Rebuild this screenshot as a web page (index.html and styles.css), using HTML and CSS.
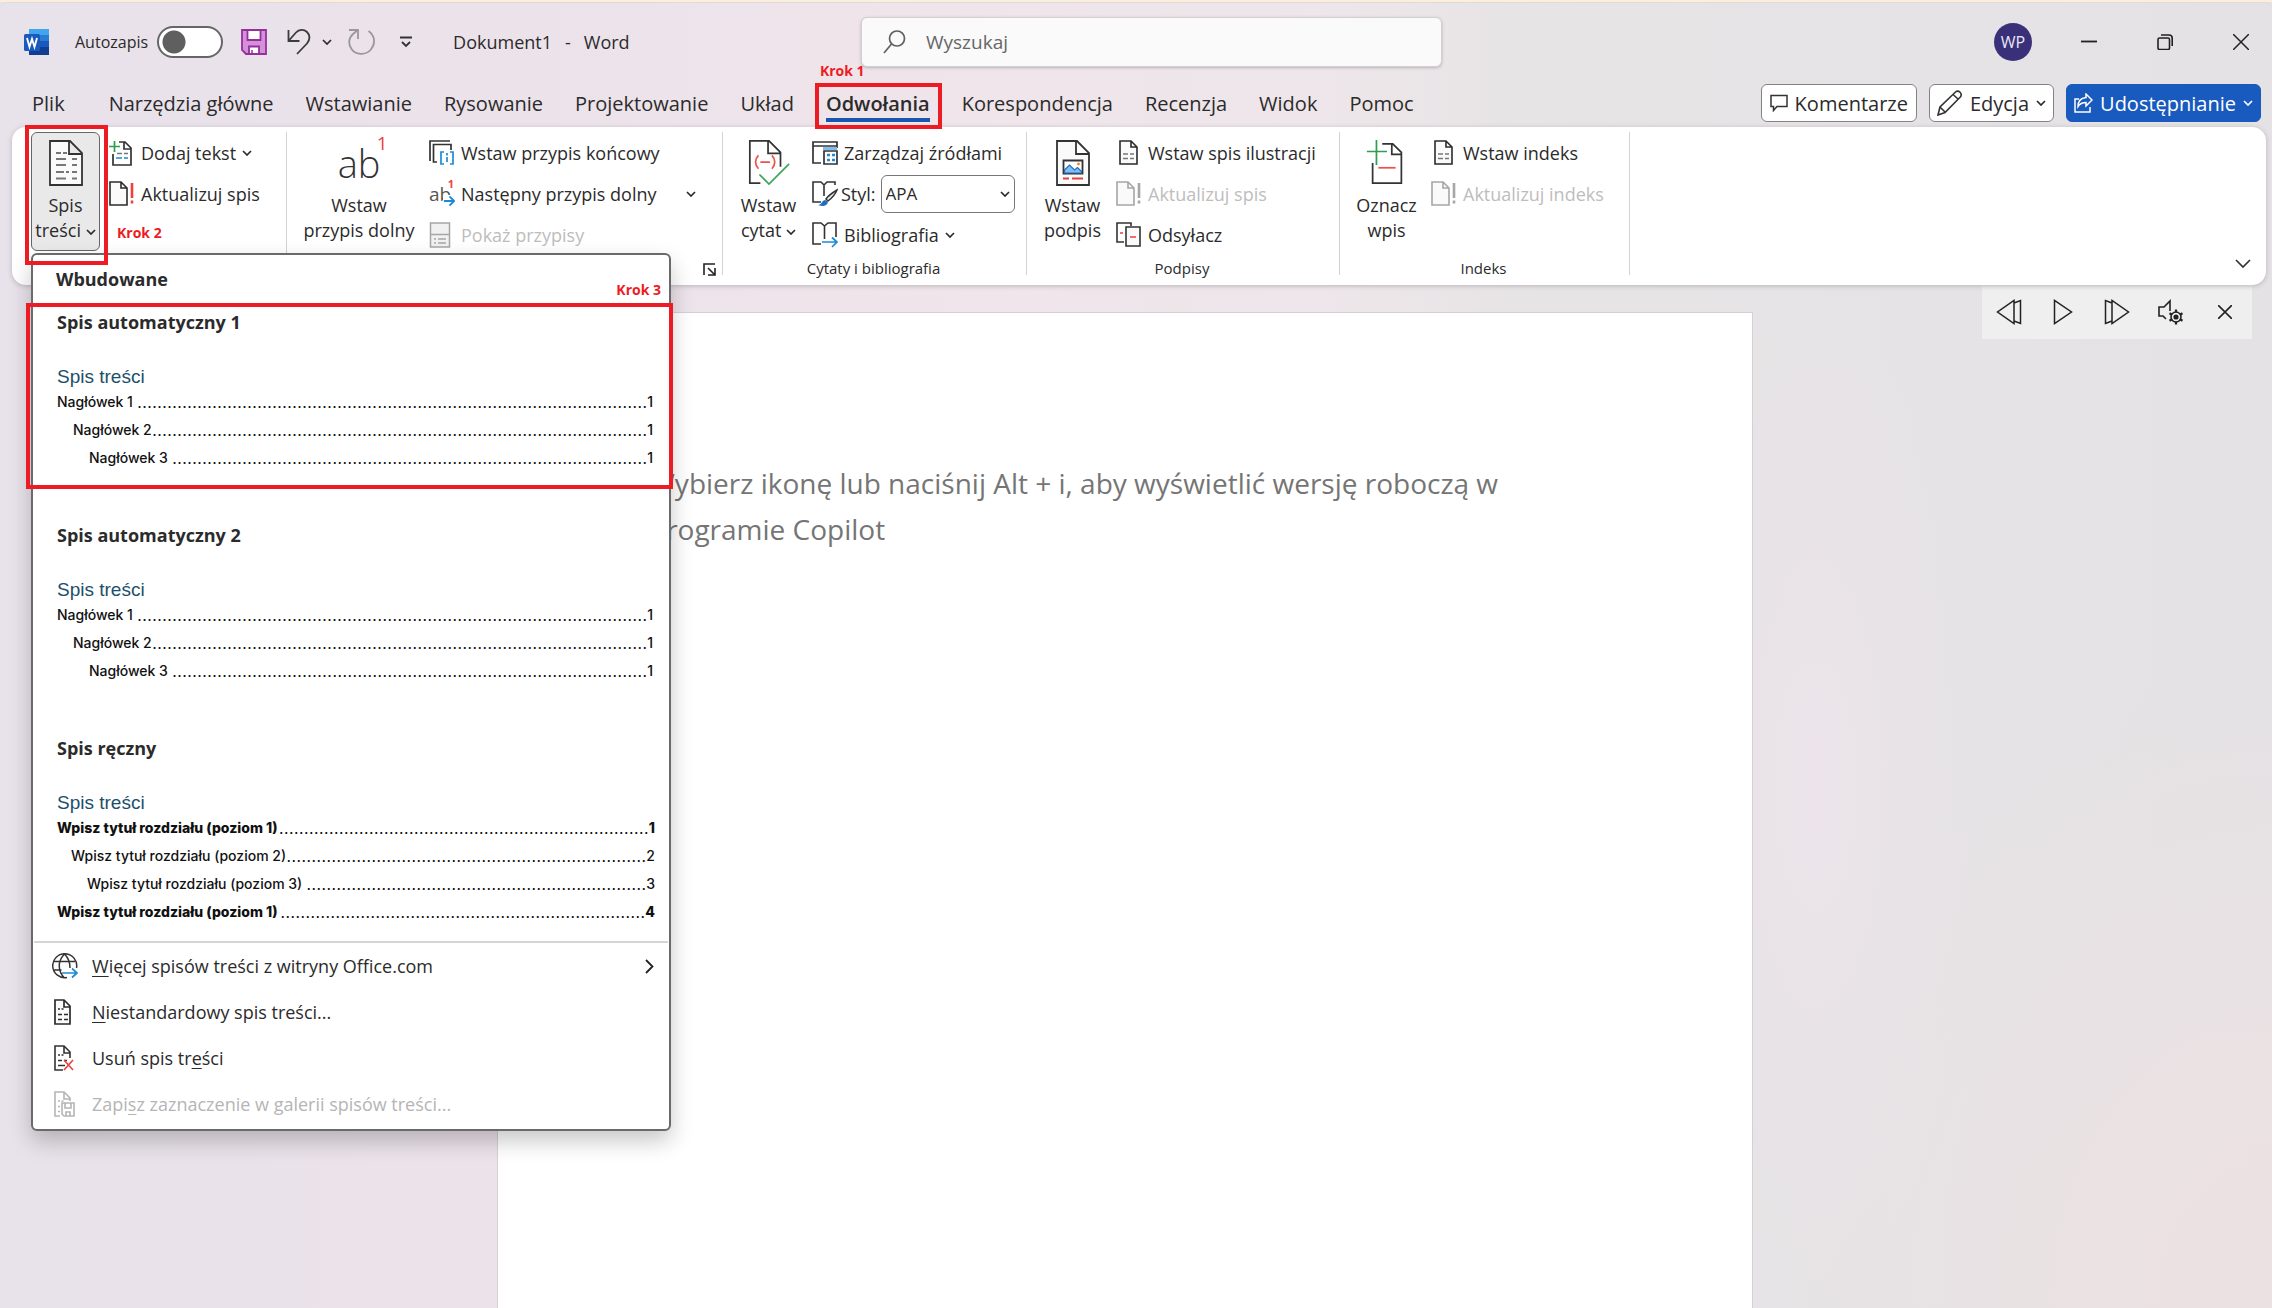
FILE: index.html
```html
<!DOCTYPE html>
<html lang="pl">
<head>
<meta charset="utf-8">
<meta name="viewport" content="width=device-width, initial-scale=1">
<title>Dokument1 - Word</title>
<link rel="stylesheet" href="styles.css">
</head>
<body>
<svg class="sprite" aria-hidden="true">
  <symbol id="chev" viewBox="0 0 10 6"><path d="M1 1l4 4 4-4" fill="none" stroke="currentColor" stroke-width="1.7"/></symbol>
  <symbol id="doc-alert" viewBox="0 0 26 26"><path d="M1 1h11l6 6v17H1z M12 1v6h6" fill="#fafafa" stroke="currentColor" stroke-width="1.6"/><path d="M23 2v15M23 19.500v3" stroke="var(--accent, currentColor)" stroke-width="2.600"/></symbol>
  <symbol id="doc-lines" viewBox="0 0 26 26"><path d="M4 1h11l6 6v17H4z M15 1v6h6" fill="#fafafa" stroke="currentColor" stroke-width="1.6"/><path d="M7 14h5M14 14h4M7 18.500h5M14 18.500h4" stroke="#777" stroke-width="1.500"/></symbol>
  <symbol id="doc-toc" viewBox="0 0 26 26"><path d="M3 1h9l6 6v18H3z M12 1v7h6" fill="#fafafa" stroke="currentColor" stroke-width="1.700"/><path d="M6 10h2M9.500 10h2M6 15.500h4M12 15.500h4M6 20.500h4M12 20.500h4" stroke="currentColor" stroke-width="1.300"/></symbol>
</svg>

<div class="app">
  <header class="titlebar">
    <div class="titlebar-left">
      <svg class="word-logo" viewBox="0 0 28 28" aria-hidden="true">
        <path d="M6 1h20v7H6z" fill="#41a5ee"/><path d="M6 7h20v7H6z" fill="#2b7cd3"/><path d="M6 13h20v7H6z" fill="#185abd"/><path d="M6 19h20v8H6z" fill="#103f91"/>
        <rect x="1" y="6" width="16" height="17" rx="1.500" fill="#185abd"/>
        <path d="M4 10l2.500 9L9 11l2.500 8L14 10" fill="none" stroke="#fff" stroke-width="1.900"/>
      </svg>
      <label class="autosave">Autozapis <input type="checkbox" role="switch" class="toggle"></label>
      <button class="icon-btn save" aria-label="Zapisz"><svg width="26" height="26" viewBox="0 0 26 26"><path d="M1 1h24v24H5l-4-4z" fill="#d68fdb" stroke="#93309c" stroke-width="1.800"/><path d="M6.500 1h13v10h-13z M8 25v-7.500h10V25z" fill="#fff" stroke="#93309c" stroke-width="1.800"/><path d="M11 21v4" stroke="#93309c" stroke-width="1.500"/></svg></button>
      <button class="icon-btn undo" aria-label="Cofnij"><svg width="24" height="27" viewBox="0 0 24 27" fill="none" stroke="#3b3b3b" stroke-width="1.800"><path d="M1.500 2v11h11M1.500 13L9 4.500C12 1 17 1 20 4c3.500 3.500 3 7.500 0 11.500L10 26"/></svg></button>
      <button class="icon-btn undo-more" aria-label="Historia"><svg width="10" height="6"><use href="#chev"/></svg></button>
      <button class="icon-btn redo" aria-label="Powtórz"><svg width="27" height="27" viewBox="0 0 27 27" fill="none" stroke="#9b989c" stroke-width="1.800"><path d="M1 2h9v9M10 2L5 6c-4.500 4-5 10-1.500 15 4 6 14 6.500 19 1 5.500-6 4.500-14.500-2-19"/></svg></button>
      <button class="icon-btn qat" aria-label="Dostosuj"><svg width="12" height="12" viewBox="0 0 12 12" fill="none" stroke="#333" stroke-width="1.800"><path d="M0 1.500h12M2 6l4 4 4-4"/></svg></button>
      <span class="doc-name"><span>Dokument1</span><span>-</span><span>Word</span></span>
    </div>
    <label class="search">
      <svg width="23" height="24" viewBox="0 0 23 24" fill="none" stroke="#5f5f5f" stroke-width="1.700" aria-hidden="true"><circle cx="14" cy="8.500" r="7.500"/><path d="M8.500 14L1 23"/></svg>
      <input type="search" placeholder="Wyszukaj" aria-label="Wyszukaj">
    </label>
    <div class="window-controls">
      <button class="avatar" aria-label="Konto WP">WP</button>
      <button class="win-btn" aria-label="Minimalizuj"><svg width="16" height="16"><path d="M0 7.500h16" stroke="#222" stroke-width="1.800"/></svg></button>
      <button class="win-btn" aria-label="Przywróć"><svg width="16" height="16" viewBox="0 0 16 16" fill="none" stroke="#222" stroke-width="1.600"><rect x="1" y="4" width="11.500" height="11.500" rx="1.500"/><path d="M4 1h8c2 0 3.200 1.200 3.200 3.200V12"/></svg></button>
      <button class="win-btn" aria-label="Zamknij"><svg width="16" height="16"><path d="M0 0l16 16M16 0L0 16" stroke="#222" stroke-width="1.500"/></svg></button>
    </div>
  </header>

  <div class="tabs-row">
    <nav class="tabs">
      <button class="tab tab-file">Plik</button>
      <button class="tab">Narzędzia główne</button>
      <button class="tab">Wstawianie</button>
      <button class="tab">Rysowanie</button>
      <button class="tab">Projektowanie</button>
      <button class="tab">Układ</button>
      <div class="marked">
        <button class="tab active">Odwołania</button>
        <span class="mark mark-tab"></span>
        <span class="step step-tab">Krok 1</span>
      </div>
      <button class="tab">Korespondencja</button>
      <button class="tab">Recenzja</button>
      <button class="tab">Widok</button>
      <button class="tab">Pomoc</button>
    </nav>
    <div class="actions">
      <button class="action"><svg width="18" height="18" viewBox="0 0 18 18" fill="none" stroke="#333" stroke-width="1.500"><path d="M1 1.500h16v11H7L3.500 16.500v-4H1z"/></svg>Komentarze</button>
      <button class="action action-edit"><svg width="26" height="26" viewBox="0 0 26 26" fill="none" stroke="#333" stroke-width="1.600"><path d="M1 25l2-8L18.500 2c3-2.500 7.500 1.500 4.800 5L8 22.500z M16 4.500l5.500 5M3 17l5.500 5.500"/></svg>Edycja<svg width="10" height="6"><use href="#chev"/></svg></button>
      <button class="action action-share"><svg width="19" height="20" viewBox="0 0 19 20" fill="none" stroke="currentColor" stroke-width="1.500"><path d="M5 6H1v13h15v-5M12 1l6 6-6 6V9.500c-4 0-6 1-8 4 0-5 3-8.500 8-9z"/></svg>Udostępnianie<svg width="10" height="6"><use href="#chev"/></svg></button>
    </div>
  </div>

  <section class="ribbon" aria-label="Odwołania">
    <div class="group group-toc">
      <div class="group-body">
        <div class="marked toc-anchor">
          <button class="big pressed">
            <svg width="34" height="46" viewBox="0 0 34 46" fill="none"><path d="M1 1h20l12 12v32H1z M20 1v13h13" fill="#fafafa" stroke="#333" stroke-width="1.800"/><path d="M7 13h5M14 13h4M7 19h10M23 19h5M7 25h10M23 25h5M7 32h8M17 32h3M23 32h5M7 38.500h10M23 38.500h5" stroke="#777" stroke-width="1.800"/></svg>
            <span>Spis</span><span>treści <svg width="10" height="6"><use href="#chev"/></svg></span>
          </button>
          <span class="mark mark-toc"></span>

          <div class="menu">
            <h2 class="menu-head">Wbudowane</h2>
            <span class="step step-menu">Krok 3</span>
            <button class="entry">
              <span class="entry-title">Spis automatyczny 1</span>
              <span class="toc-title">Spis treści</span>
              <span class="toc-row"><span>Nagłówek 1</span><span class="dots"></span><span>1</span></span>
              <span class="toc-row lvl2"><span>Nagłówek 2</span><span class="dots"></span><span>1</span></span>
              <span class="toc-row lvl3"><span>Nagłówek 3</span><span class="dots"></span><span>1</span></span>
              <span class="mark mark-entry"></span>
            </button>
            <button class="entry">
              <span class="entry-title">Spis automatyczny 2</span>
              <span class="toc-title">Spis treści</span>
              <span class="toc-row"><span>Nagłówek 1</span><span class="dots"></span><span>1</span></span>
              <span class="toc-row lvl2"><span>Nagłówek 2</span><span class="dots"></span><span>1</span></span>
              <span class="toc-row lvl3"><span>Nagłówek 3</span><span class="dots"></span><span>1</span></span>
            </button>
            <button class="entry entry-manual">
              <span class="entry-title">Spis ręczny</span>
              <span class="toc-title">Spis treści</span>
              <span class="toc-row strong"><span>Wpisz tytuł rozdziału (poziom 1)</span><span class="dots"></span><span>1</span></span>
              <span class="toc-row lvl2"><span>Wpisz tytuł rozdziału (poziom 2)</span><span class="dots"></span><span>2</span></span>
              <span class="toc-row lvl3"><span>Wpisz tytuł rozdziału (poziom 3)</span><span class="dots"></span><span>3</span></span>
              <span class="toc-row strong"><span>Wpisz tytuł rozdziału (poziom 1)</span><span class="dots"></span><span>4</span></span>
            </button>
            <div class="menu-items">
              <button class="item"><svg width="26" height="26" viewBox="0 0 26 26" fill="none" stroke="#333" stroke-width="1.500"><path d="M24.500 15A12 12 0 1 0 15 24.500M12.500 1c-7 7-7 17 0 24M12.500 1c4 4 5.500 8 5.500 14M2 8.500h21M1.500 17h8"/><path d="M10 20h15M20 15.500l5 4.500-5 4.500" stroke="#1e8ad6" stroke-width="1.700"/></svg><span><u>W</u>ięcej spisów treści z witryny Office.com</span><svg class="more" width="9" height="15" viewBox="0 0 9 15"><path d="M1 1l6.500 6.500L1 14" fill="none" stroke="#222" stroke-width="1.800"/></svg></button>
              <button class="item"><svg width="26" height="26"><use href="#doc-toc"/></svg><span><u>N</u>iestandardowy spis treści...</span></button>
              <button class="item"><svg width="26" height="26" viewBox="0 0 26 26" fill="none" stroke="#333" stroke-width="1.600"><path d="M11 25H3V1h9l6 6v6M12 1v7h6M6 10h2M9.500 10h2M6 15.500h4M12 15.500h3M6 20.500h7"/><path d="M12 15l9 10M21 15l-9 10" stroke="#e8413c"/></svg><span>Usuń spis tr<u>e</u>ści</span></button>
              <button class="item" disabled><svg width="26" height="26" viewBox="0 0 26 26" fill="none" stroke="currentColor" stroke-width="1.600"><path d="M8 25H3V1h9l6 6v3M12 1v7h6M6 10h2M9.500 10h2M6 15.500h2M6 20.500h2"/><path d="M10 12h12v13H12l-2-2z M13 12v5h6v-5M14 25v-4h4v4"/></svg><span>Zapi<u>s</u>z zaznaczenie w galerii spisów treści...</span></button>
            </div>
          </div>
        </div>
        <div class="stack">
          <button class="small"><svg width="26" height="26" viewBox="0 0 26 26" fill="none"><path d="M10 2h6l6 6v17H4V14M15 2v7h7" stroke="#333" stroke-width="1.700"/><path d="M0 6.500h11M5.500 1v11" stroke="#2f9e4d" stroke-width="1.700"/><path d="M8 13.500h5M15 13.500h4" stroke="#777" stroke-width="1.500"/><path d="M7 18h6M15 18h4" stroke="#1e8ad6" stroke-width="1.700"/></svg><span>Dodaj tekst</span><svg width="10" height="6"><use href="#chev"/></svg></button>
          <button class="small alert"><svg width="26" height="26"><use href="#doc-alert"/></svg><span>Aktualizuj spis</span></button>
          <span class="step step-toc">Krok 2</span>
        </div>
      </div>
    </div>

    <div class="group group-notes">
      <div class="group-body">
        <button class="big">
          <span class="ab">ab<sup>1</sup></span>
          <span>Wstaw</span><span>przypis dolny</span>
        </button>
        <div class="stack">
          <button class="small"><svg width="26" height="26" viewBox="0 0 26 26" fill="none"><path d="M1 21V1h20M8 22H4.500V4.500H22V10" stroke="#333" stroke-width="1.700"/><path d="M15 12h-3v12h3M21 12h3v12h-3M18 13v2.500M18 17v5" stroke="#1e8ad6" stroke-width="1.700"/></svg><span>Wstaw przypis końcowy</span></button>
          <div class="split">
            <button class="small"><span class="ab-small">ab<sup>1</sup><svg width="12" height="12" viewBox="0 0 13 13" fill="none" stroke="#1e8ad6" stroke-width="2"><path d="M1 6.500h11M7 1.500l5 5-5 5"/></svg></span><span>Następny przypis dolny</span></button>
            <button class="small" aria-label="Więcej"><svg width="10" height="6"><use href="#chev"/></svg></button>
          </div>
          <button class="small" disabled><svg width="26" height="26" viewBox="0 0 26 26" fill="none" stroke="#a6a6a6" stroke-width="1.500"><path d="M1.500 1h19v24h-19z" fill="#f1f1f1"/><path d="M1.500 12.500h19M5 17h2M9 17h8M5 21h2M9 21h8"/></svg><span>Pokaż przypisy</span></button>
        </div>
      </div>
      <div class="group-label"><button class="launcher" aria-label="Opcje przypisów"><svg width="13" height="13" viewBox="0 0 13 13" fill="none" stroke="#222" stroke-width="1.600"><path d="M1 12V1h11M5 5l6 6M12 5v7H5"/></svg></button></div>
    </div>

    <div class="group group-cite">
      <div class="group-body">
        <button class="big">
          <svg class="wide" width="44" height="48" viewBox="0 0 44 48" fill="none"><path d="M13 45H2V1h20l12 12v15M21 1v13h13" stroke="#333" stroke-width="1.800"/><path d="M11 16c-4 4-4 10 0 14M25 16c4 4 4 10 0 14M13 23h10" stroke="#f0504a" stroke-width="1.800"/><path d="M12 36l10 10 21-21" stroke="#3aa757" stroke-width="1.800"/></svg>
          <span>Wstaw</span><span>cytat <svg width="10" height="6"><use href="#chev"/></svg></span>
        </button>
        <div class="stack">
          <button class="small"><svg width="26" height="26" viewBox="0 0 26 26" fill="none"><path d="M9 23H1V2h24v6M1 6h24" stroke="#333" stroke-width="1.700"/><path d="M11 7h14v3H11z" fill="#83bdf0"/><path d="M12 11h13v13H12z" stroke="#333" stroke-width="1.700"/><path d="M15 15h3M20 15h3M15 20h3M20 20h3" stroke="#1e8ad6" stroke-width="2.600"/></svg><span>Zarządzaj źródłami</span></button>
          <div class="small style-row">
            <svg width="26" height="26" viewBox="0 0 26 26" fill="none"><path d="M9 21H1V1h8l3 3v11M12 4l3-3h8v3" stroke="#333" stroke-width="1.600"/><path d="M25 9c-5 3-9 6-11 9l2 2c4-3 7-6 9-11z" stroke="#333" stroke-width="1.500" fill="#eee"/><path d="M6 24c4 0 3-4 7-5 3 1 4 3 1 5-2 1.500-5 1-8 0z" fill="#1e6fc0"/></svg>
            <label for="style">Styl:</label>
            <span class="combo"><select id="style"><option>APA</option><option>MLA</option></select><svg width="10" height="6"><use href="#chev"/></svg></span>
          </div>
          <button class="small"><svg width="26" height="26" viewBox="0 0 26 26" fill="none"><path d="M9 22H1V1h8l3.500 3v13M12.500 4L16 1h8v14" stroke="#333" stroke-width="1.600"/><path d="M10 20h15M20 15.500l5 4.500-5 5" stroke="#1e8ad6" stroke-width="1.700"/></svg><span>Bibliografia</span><svg width="10" height="6"><use href="#chev"/></svg></button>
        </div>
      </div>
      <div class="group-label">Cytaty i bibliografia</div>
    </div>

    <div class="group group-caption">
      <div class="group-body">
        <button class="big">
          <svg width="34" height="46" viewBox="0 0 34 46" fill="none"><path d="M1 1h20l12 12v32H1z M20 1v13h13" fill="#fafafa" stroke="#333" stroke-width="1.800"/><path d="M7.500 20.500h19v13h-19z" stroke="#333" stroke-width="1.800" fill="#fff"/><path d="M8.500 30l5-5 5 5 3-2.500 4 4v1.500h-17z" fill="#83bdf0" stroke="#1e6fc0" stroke-width="1.200"/><circle cx="22.500" cy="24" r="1.400" fill="#f08030"/><path d="M7 38.500h6M16 38.500h11" stroke="#e8413c" stroke-width="1.800"/></svg>
          <span>Wstaw</span><span>podpis</span>
        </button>
        <div class="stack">
          <button class="small"><svg width="26" height="26"><use href="#doc-lines"/></svg><span>Wstaw spis ilustracji</span></button>
          <button class="small" disabled><svg width="26" height="26"><use href="#doc-alert"/></svg><span>Aktualizuj spis</span></button>
          <button class="small"><svg width="26" height="26" viewBox="0 0 26 26" fill="none"><path d="M8 20H1V1h14v3" stroke="#333" stroke-width="1.600"/><path d="M10 5h14v19H10z" fill="#fafafa" stroke="#333" stroke-width="1.600"/><path d="M4 11h3M14 15h6" stroke="#e8413c" stroke-width="1.700"/></svg><span>Odsyłacz</span></button>
        </div>
      </div>
      <div class="group-label">Podpisy</div>
    </div>

    <div class="group group-index">
      <div class="group-body">
        <button class="big">
          <svg class="wide" width="44" height="48" viewBox="0 0 44 48" fill="none"><path d="M17 4h11l9 9v32H7V24M27 4v11h10" stroke="#333" stroke-width="1.800"/><path d="M1 12h21M11 0v26" stroke="#2f9e4d" stroke-width="1.800"/><path d="M13 29h18" stroke="#f0504a" stroke-width="1.800"/></svg>
          <span>Oznacz</span><span>wpis</span>
        </button>
        <div class="stack">
          <button class="small"><svg width="26" height="26"><use href="#doc-lines"/></svg><span>Wstaw indeks</span></button>
          <button class="small" disabled><svg width="26" height="26"><use href="#doc-alert"/></svg><span>Aktualizuj indeks</span></button>
        </div>
      </div>
      <div class="group-label">Indeks</div>
    </div>
    <button class="collapse" aria-label="Zwiń wstążkę"><svg width="16" height="9" viewBox="0 0 16 9" fill="none" stroke="#333" stroke-width="1.700"><path d="M1 1l7 7 7-7"/></svg></button>
  </section>

  <main class="workspace">
    <article class="page">
      <p class="hint">Wybierz ikonę lub naciśnij Alt + i, aby wyświetlić wersję roboczą w programie Copilot</p>
    </article>
    <div class="reader">
      <button aria-label="Poprzedni"><svg width="26" height="26" viewBox="0 0 26 26" fill="none" stroke="#222" stroke-width="1.500"><path d="M18 1.500v23L1.500 13z M18 4l6.500-2.500v23L18 22"/></svg></button>
      <button aria-label="Odtwórz"><svg width="20" height="26" viewBox="0 0 20 26" fill="none" stroke="#222" stroke-width="1.500"><path d="M1.500 1.500v23L18.500 13z"/></svg></button>
      <button aria-label="Następny"><svg width="26" height="26" viewBox="0 0 26 26" fill="none" stroke="#222" stroke-width="1.500"><path d="M8 1.500v23L24.500 13z M8 4L1.500 1.500v23L8 22"/></svg></button>
      <button aria-label="Ustawienia głosu"><svg width="26" height="26" viewBox="0 0 26 26" fill="none" stroke="#222" stroke-width="1.600"><path d="M12 12V2L6 8H1v9h4l3 3"/><circle cx="18" cy="18" r="5"/><circle cx="18" cy="18" r="1.800" fill="#222"/><path d="M18 10.500v3M18 22.500v3M11.500 14.200l2.600 1.500M21.900 20.300l2.600 1.500M11.500 21.800l2.600-1.500M21.900 15.700l2.600-1.500" stroke-width="2.200"/></svg></button>
      <button aria-label="Zamknij"><svg width="14" height="14"><path d="M0 0l14 14M14 0L0 14" stroke="#222" stroke-width="1.600"/></svg></button>
    </div>
  </main>
</div>
<script src="leaders.js"></script>
</body>
</html>
```
FILE: leaders.js
```js
// Fill each table-of-contents leader with as many dots as its width holds.
document.querySelectorAll('.dots').forEach(function (el) {
  el.textContent = '.'.repeat(Math.floor(el.clientWidth / 5));
});
```
FILE: styles.css
```css
* { box-sizing: border-box; }

body {
  margin: 0;
  font-family: "Open Sans", "Noto Sans", sans-serif;
  font-size: 18px;
  color: #2b2b2b;
}

button, input, select { font: inherit; color: inherit; }
button { background: none; border: 0; padding: 0; text-align: left; }
svg { flex: none; }
.sprite { display: none; }

.app {
  display: flex;
  flex-direction: column;
  height: 100vh;
  overflow: hidden;
  border-top: 2px solid #fdeeda;
  background:
    radial-gradient(ellipse 22% 50% at 100% 100%, #ebe1e2 20%, #ebe1e200),
    radial-gradient(ellipse 7% 40% at 80% 60%, #ece4ea 0, #ece4ea00),
    linear-gradient(90deg, #e8e2ea 0, #ece2ea 22%, #efe5ea 45%, #eee6ea 58%, #e6e4e5 68%, #e4e2e5 100%);
}

/* Title bar */
.titlebar {
  display: grid;
  grid-template-columns: 861fr 581fr 830fr;
  align-items: center;
  height: 78px;
  border-top: 1px solid #dcdcdc;
  border-radius: 8px 8px 0 0;
}
.titlebar-left { display: flex; align-items: center; padding-left: 23px; }
.word-logo { width: 28px; height: 28px; }
.autosave { display: flex; align-items: center; gap: 9px; margin-left: 24px; font-size: 16px; }
.toggle {
  appearance: none;
  width: 66px;
  height: 32px;
  margin: 0;
  border: 2px solid #666;
  border-radius: 16px;
  background: radial-gradient(circle at 15px 14px, #5f5f5f 11px, #fff 12px);
}
.icon-btn { display: flex; }
.save { margin-left: 18px; }
.undo { margin-left: 20px; }
.undo-more { margin-left: 11px; }
.redo { margin-left: 16px; }
.qat { margin-left: 25px; }
.doc-name { display: flex; gap: 13px; margin-left: 41px; }
.search {
  display: flex;
  align-items: center;
  gap: 20px;
  height: 50px;
  padding-left: 21px;
  background: #fafafa;
  border: 1px solid #d3ced2;
  border-radius: 6px;
  box-shadow: 0 1px 3px #b8b2b6;
}
.search input { flex: 1; border: 0; background: none; padding: 0; font-size: 19px; outline: 0; }
.search input::placeholder { color: #666; }
.window-controls { display: flex; align-items: center; justify-content: flex-end; gap: 14px; }
.avatar {
  width: 38px;
  height: 38px;
  margin-right: 12px;
  border-radius: 50%;
  background: #3a3079;
  color: #e8e6f4;
  font-size: 16px;
  text-align: center;
}
.win-btn { display: flex; align-items: center; justify-content: center; width: 62px; height: 40px; }

/* Ribbon tabs */
.tabs-row { display: flex; justify-content: space-between; height: 47px; padding: 2px 11px 0 32px; }
.tabs { display: flex; gap: 32px; align-items: flex-start; }
.tab {
  display: block;
  padding: 7px 0 0;
  border-bottom: 4px solid transparent;
  font-size: 20px;
  line-height: 29px;
  white-space: nowrap;
}
.tab-file { margin-right: 12px; }
.tab.active { font-weight: 600; border-color: #1a55b0; }
.marked { position: relative; }
.mark { position: absolute; z-index: 5; border: 4px solid #ed1c24; pointer-events: none; }
.mark-tab { inset: 1px -12px -7px -11px; }
.step { font-size: 14px; font-weight: 700; line-height: 16px; color: #ed1c24; }
.step-tab { position: absolute; left: -6px; top: -19px; white-space: nowrap; }
.actions { display: flex; gap: 12px; align-items: flex-start; padding-top: 2px; }
.action {
  display: flex;
  align-items: center;
  gap: 7px;
  height: 38px;
  padding: 0 8px;
  border: 1px solid #858285;
  border-radius: 6px;
  background: #fff;
  font-size: 20px;
}
.action-edit, .action-share { padding: 0 7px; }
.action-share { background: #185abd; border-color: #185abd; color: #fff; }

/* Ribbon */
.ribbon {
  position: relative;
  z-index: 2;
  display: flex;
  margin: 0 6px 0 12px;
  height: 158px;
  padding: 5px 0 10px 19px;
  background: #fff;
  border-radius: 14px;
  box-shadow: 0 1px 5px #b9b3b9;
}
.group { display: flex; flex-direction: column; padding-left: 8px; border-right: 1px solid #d2d2d2; }
.group-toc { width: 256px; padding-left: 0; }
.group-notes { width: 436px; }
.group-cite { width: 304px; }
.group-caption { width: 313px; }
.group-index { width: 290px; }
.group-body { display: flex; gap: 6px; height: 123px; }
.group-toc .group-body { gap: 9px; }
.group-label { position: relative; height: 20px; line-height: 26px; font-size: 15px; text-align: center; padding-right: 10px; }
.launcher { display: flex; float: right; margin: 8px -4px 0 0; }
.big {
  display: flex;
  flex-direction: column;
  align-items: center;
  height: 119px;
  padding-top: 8px;
  line-height: 25px;
  white-space: nowrap;
}
.big > svg { height: 46px; margin-bottom: 7px; }
.group-toc .big { width: 69px; }
.group-notes .big { width: 128px; }
.group-cite .big, .group-caption .big { width: 75px; }
.group-index .big { width: 77px; }
.big span svg { vertical-align: middle; }
.pressed { background: #e9e9e9; border: 1px solid #666; border-radius: 6px; }
.pressed.big { padding-top: 7px; }
.ab { position: relative; height: 53px; line-height: 46px; font-size: 38px; font-weight: 300; color: #333; }
.ab sup { position: absolute; left: 39px; top: -7px; line-height: 20px; font-size: 19px; font-weight: 400; color: #f0403c; }
.ab-small { position: relative; width: 26px; font-size: 19px; line-height: 26px; color: #555; }
.ab-small sup { position: absolute; right: 1px; top: -3px; font-size: 11px; line-height: 12px; font-weight: 700; color: #f0403c; }
.ab-small svg { position: absolute; right: 0; bottom: 0; background: #fff; }
.stack { flex: 1; display: flex; flex-direction: column; align-items: flex-start; }
.small { display: flex; align-items: center; gap: 6px; height: 41px; white-space: nowrap; }
.small:disabled { color: #bdbdbd; }
.small:disabled svg { color: #a6a6a6; }
.alert { --accent: #f0403c; }
.split { display: flex; justify-content: space-between; align-self: stretch; padding-right: 26px; }
.style-row { gap: 3px; }
.combo { position: relative; display: flex; align-items: center; margin-left: 2px; }
.combo select {
  appearance: none;
  width: 134px;
  height: 38px;
  padding: 0 4px;
  border: 1px solid #777;
  border-radius: 6px;
  background: #fff;
  font-size: 17px;
}
.combo svg { position: absolute; right: 5px; pointer-events: none; }
.step-toc { padding: 11px 8px; }
.mark-toc { inset: -7px -8px -14px -6px; }
.toc-anchor { align-self: flex-start; }
.collapse { display: flex; align-items: flex-end; margin-left: auto; padding: 0 15px 7px 0; }

/* Table-of-contents gallery */
.menu {
  position: absolute;
  left: 0;
  top: 121px;
  z-index: 4;
  width: 640px;
  padding-bottom: 2px;
  background: #fff;
  border: 2px solid #6a6a6a;
  border-radius: 6px;
  box-shadow: 0 10px 22px #00000038;
}
.menu-head { margin: 0; padding-left: 23px; font-size: 18px; line-height: 48px; height: 47px; }
.step-menu { position: absolute; right: 8px; top: 27px; }
.entry {
  position: relative;
  display: flex;
  flex-direction: column;
  width: 100%;
  height: 213px;
  padding: 6px 16px 0 24px;
}
.entry-title { font-weight: 700; line-height: 28px; }
.toc-title { margin-top: 30px; font: 19px/22px "Liberation Sans", Arial, sans-serif; color: #1d4f6b; }
.toc-row { display: flex; font: 500 14px/28px Inter, Arial, sans-serif; color: #111; }
.lvl2 { padding-left: 16px; }
.lvl3 { padding-left: 32px; }
.entry-manual { padding-right: 14px; }
.entry-manual .lvl2 { padding-left: 14px; }
.entry-manual .lvl3 { padding-left: 30px; }
.strong { font-weight: 800; }
.dots {
  flex: 1;
  min-width: 0;
  font-family: "Liberation Sans", Arial, sans-serif;
  font-size: 18px;
  font-weight: 400;
  text-align: right;
  white-space: nowrap;
}
.mark-entry { inset: 1px -4px auto -7px; height: 186px; }
.menu-items { border-top: 2px solid #d5d5d5; margin: 0 1px; }
.item { display: flex; align-items: center; gap: 14px; width: 100%; height: 46px; padding: 0 14px 0 18px; }
.item:disabled { color: #b5b5b5; }
.item u { text-underline-offset: 3px; }
.more { margin-left: auto; }

/* Document */
.workspace { position: relative; flex: 1; display: flex; padding: 27px 519px 0 497px; }
.page { flex: 1; background: #fff; border: 1px solid #d4d0d4; border-bottom: 0; padding: 147px 235px 0 151px; }
.hint { margin: 0; font-size: 28px; line-height: 46px; color: #757575; }
.reader { position: absolute; top: 0; right: 20px; display: flex; height: 54px; background: #efefef; }
.reader button { display: flex; align-items: center; justify-content: center; width: 54px; }
```
